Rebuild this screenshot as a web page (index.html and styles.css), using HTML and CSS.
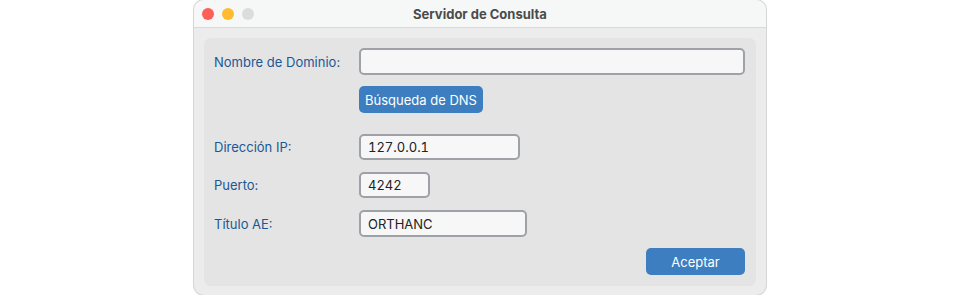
FILE: index.html
```html
<!DOCTYPE html>
<html lang="es">
  <head>
    <meta charset="utf-8">
    <title>Servidor de Consulta</title>
    <link rel="stylesheet" href="styles.css">
  </head>
  <body>
    <div class="window">
      <div class="titlebar">
        <div class="lights">
          <span class="light red"></span>
          <span class="light yellow"></span>
          <span class="light gray"></span>
        </div>
        <div class="title">Servidor de Consulta</div>
      </div>
      <div class="content">
        <div class="panel">
          <div class="row row-domain">
            <div class="label">Nombre de Dominio:</div>
            <input class="field field-domain" type="text" value="">
          </div>
          <div class="row row-dns">
            <div class="label"></div>
            <button class="btn">Búsqueda de DNS</button>
          </div>
          <div class="row row-ip">
            <div class="label">Dirección IP:</div>
            <input class="field field-ip" type="text" value="127.0.0.1">
          </div>
          <div class="row row-port">
            <div class="label">Puerto:</div>
            <input class="field field-port" type="text" value="4242">
          </div>
          <div class="row row-ae">
            <div class="label">Título AE:</div>
            <input class="field field-ae" type="text" value="ORTHANC">
          </div>
          <div class="row row-ok">
            <button class="btn btn-ok">Aceptar</button>
          </div>
        </div>
      </div>
    </div>
  </body>
</html>
```

FILE: styles.css
```css
body { margin: 0; background: #ffffff; font-family: "Inter", "Liberation Sans", sans-serif; }
.window { width: 572px; height: 295px; margin-left: 194px; background: #ececec; border-radius: 10px; box-shadow: 0 0 0 1px #d6d6d6; overflow: hidden; }
.titlebar { height: 27px; background: #f6f7f7; border-bottom: 1px solid #d9d9d9; display: flex; align-items: center; position: relative; }
.lights { display: flex; gap: 8px; padding-left: 8px; }
.light { width: 12px; height: 12px; border-radius: 50%; display: block; }
.red { background: #fe5f57; }
.yellow { background: #febc2e; }
.gray { background: #dcdcdc; }
.title { position: absolute; left: 0; right: 0; text-align: center; font-size: 13px; font-weight: 700; color: #4b4b4b; }
.content { padding: 10px 10px 0 10px; }
.panel { background: #e4e4e4; border-radius: 7px; height: 248px; padding: 10px 11px 0 10px; box-sizing: border-box; }
.row { display: flex; align-items: center; }
.label { width: 145px; font-size: 13px; color: #1b5796; }
.field { box-sizing: border-box; height: 27px; border: 2px solid #9ea2a7; border-radius: 5px; background: #f7f7f7; font-family: inherit; font-size: 13px; color: #222; padding: 0 7px; outline: none; font-variant-numeric: tabular-nums; }
.field-domain { width: 386px; }
.field-ip { width: 161px; height: 26px; }
.field-port { width: 71px; height: 26px; }
.field-ae { width: 168px; }
.row-dns { margin-top: 11px; }
.row-ip { margin-top: 21px; }
.row-port { margin-top: 12px; }
.row-ae { margin-top: 12px; }
.row-ok { margin-top: 11px; justify-content: flex-end; }
.btn { height: 27px; border: none; border-radius: 5px; background: #3c7ec0; color: #ffffff; font-family: inherit; font-size: 13px; padding: 0 6px; }
.btn-ok { width: 99px; }
```
